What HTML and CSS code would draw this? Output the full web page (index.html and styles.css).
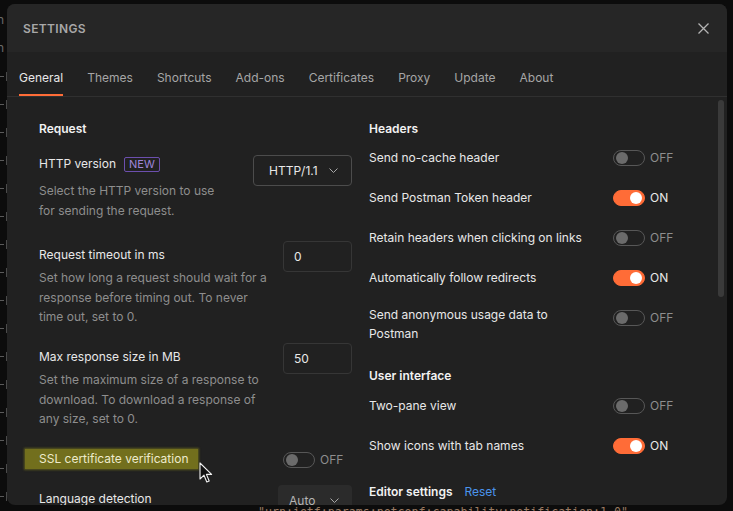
FILE: index.html
```html
<!DOCTYPE html>
<html lang="en">
<head>
  <meta charset="UTF-8" />
  <meta name="viewport" content="width=device-width, initial-scale=1" />
  <title>Settings</title>
  <link rel="stylesheet" href="styles.css">
</head>
<body>
  <!-- Editor behind the dialog -->
  <div class="app">
    <div class="gutter">
      <span class="gutter-text">n</span>
      <span class="gutter-text">n</span>
      <span class="fold"></span><span class="fold"></span><span class="fold"></span>
      <span class="fold"></span><span class="fold"></span><span class="fold"></span>
      <span class="fold"></span><span class="fold"></span><span class="fold"></span>
      <span class="fold"></span><span class="fold"></span><span class="fold"></span>
      <span class="fold"></span><span class="fold"></span><span class="fold"></span>
      <span class="fold"></span>
    </div>
    <div class="code">
      <div class="code-line">"urn:ietf:params:netconf:capability:notification:1.0",</div>
    </div>
  </div>

  <div class="modal">
    <div class="modal-header">
      <h2 class="modal-title">SETTINGS</h2>
      <button class="close" aria-label="Close">
        <svg width="11" height="11" viewBox="0 0 11 11"><path d="M0.5 0.5L10.5 10.5M10.5 0.5L0.5 10.5" stroke="#b4b4b4" stroke-width="1.3" fill="none"/></svg>
      </button>
    </div>

    <nav class="tabs">
      <a class="tab active">General</a>
      <a class="tab">Themes</a>
      <a class="tab">Shortcuts</a>
      <a class="tab">Add-ons</a>
      <a class="tab">Certificates</a>
      <a class="tab">Proxy</a>
      <a class="tab">Update</a>
      <a class="tab">About</a>
    </nav>

    <div class="content">
      <section class="col">
        <h3 class="section-title">Request</h3>

        <div class="field field--first">
          <div class="field-text">
            <div class="field-label">HTTP version <span class="badge">NEW</span></div>
            <p class="field-desc">Select the HTTP version to use for sending the request.</p>
          </div>
          <button class="select select--http">HTTP/1.1
            <svg width="9" height="5" viewBox="0 0 9 5"><path d="M0.5 0.5L4.5 4.5L8.5 0.5" stroke="#a8a8a8" fill="none"/></svg>
          </button>
        </div>

        <div class="field">
          <div class="field-text">
            <div class="field-label">Request timeout in ms</div>
            <p class="field-desc">Set how long a request should wait for a response before timing out. To never time out, set to 0.</p>
          </div>
          <input class="input" type="text" value="0">
        </div>

        <div class="field">
          <div class="field-text">
            <div class="field-label">Max response size in MB</div>
            <p class="field-desc">Set the maximum size of a response to download. To download a response of any size, set to 0.</p>
          </div>
          <input class="input" type="text" value="50">
        </div>

        <div class="field">
          <div class="field-text">
            <div class="field-label"><span class="marker">SSL certificate verification</span></div>
          </div>
          <div class="field-toggle">
            <span class="toggle"><span class="switch"><i></i></span>OFF</span>
          </div>
        </div>

        <div class="field field--last">
          <div class="field-text">
            <div class="field-label">Language detection</div>
          </div>
          <button class="select select--auto">Auto
            <svg width="9" height="5" viewBox="0 0 9 5"><path d="M0.5 0.5L4.5 4.5L8.5 0.5" stroke="#a8a8a8" fill="none"/></svg>
          </button>
        </div>
      </section>

      <section class="col">
        <h3 class="section-title">Headers</h3>
        <div class="rows">
          <div class="row"><span class="row-label">Send no-cache header</span><span class="toggle"><span class="switch"><i></i></span>OFF</span></div>
          <div class="row"><span class="row-label">Send Postman Token header</span><span class="toggle on"><span class="switch"><i></i></span>ON</span></div>
          <div class="row"><span class="row-label">Retain headers when clicking on links</span><span class="toggle"><span class="switch"><i></i></span>OFF</span></div>
          <div class="row"><span class="row-label">Automatically follow redirects</span><span class="toggle on"><span class="switch"><i></i></span>ON</span></div>
          <div class="row"><span class="row-label">Send anonymous usage data to Postman</span><span class="toggle"><span class="switch"><i></i></span>OFF</span></div>
        </div>

        <h3 class="section-title section-title--spaced">User interface</h3>
        <div class="rows">
          <div class="row"><span class="row-label">Two-pane view</span><span class="toggle"><span class="switch"><i></i></span>OFF</span></div>
          <div class="row"><span class="row-label">Show icons with tab names</span><span class="toggle on"><span class="switch"><i></i></span>ON</span></div>
        </div>

        <h3 class="section-title section-title--editor">Editor settings <a class="reset" href="#">Reset</a></h3>
      </section>

      <div class="scroll-thumb"></div>
    </div>

    <!-- mouse pointer captured in the screenshot -->
    <svg class="cursor" width="14" height="22" viewBox="0 0 14 22">
      <path d="M1 1L1 17L5 13.2L7.8 20L10.2 19L7.4 12.4L12.6 12.4Z" fill="#121212" stroke="#f0f0f0" stroke-width="1.1" stroke-linejoin="round"/>
    </svg>
  </div>
</body>
</html>
```

FILE: styles.css
```css
:root {
  --bg-app: #0c0c0c;
  --bg-modal: #212121;
  --bg-header: #262626;
  --border: #333333;
  --text-primary: #e8e8e8;
  --text-secondary: #8e8e8e;
  --text-tab: #a6a6a6;
  --accent: #ff6c37;
  --link: #4a94ec;
}

* {
  margin: 0;
  padding: 0;
  box-sizing: border-box;
}

body {
  position: relative;
  height: 511px;
  overflow: hidden;
  background: var(--bg-app);
  font-family: 'Inter', 'Noto Sans', sans-serif;
  font-size: 12px;
  color: var(--text-primary);
}

/* Editor in the background */
.app {
  display: flex;
  height: 511px;
}

.gutter {
  width: 7px;
  display: flex;
  flex-direction: column;
  padding-top: 6px;
  overflow: hidden;
}

.gutter-text {
  height: 28px;
  line-height: 28px;
  font-size: 12px;
  color: #6a6a6a;
  text-indent: -3px;
}

.fold {
  height: 28px;
  display: flex;
  align-items: center;
}

.fold::before {
  content: '';
  width: 4px;
  height: 1px;
  background: #5a5a5a;
}

.fold::after {
  content: '';
  width: 1px;
  height: 9px;
  margin-left: 2px;
  background: #4a4a4a;
}

.code {
  flex: 1;
  display: flex;
  flex-direction: column;
  justify-content: flex-end;
  padding-left: 251px;
}

.code-line {
  font-family: 'DejaVu Sans Mono', monospace;
  font-size: 11.6px;
  line-height: 16px;
  margin-bottom: -9px;
  color: #9a7a62;
  white-space: nowrap;
}

/* Dialog */
.modal {
  position: absolute;
  top: 4px;
  left: 7px;
  width: 720px;
  height: 501px;
  background: var(--bg-modal);
  border-radius: 8px;
  overflow: hidden;
  display: flex;
  flex-direction: column;
}

.modal-header {
  height: 48px;
  flex-shrink: 0;
  background: var(--bg-header);
  display: flex;
  align-items: center;
  justify-content: space-between;
  padding: 0 16px;
}

.modal-title {
  font-size: 12px;
  font-weight: 600;
  letter-spacing: 0.03em;
  color: #a8a8a8;
}

.close {
  width: 16px;
  height: 16px;
  border: none;
  background: none;
  display: flex;
  align-items: center;
  justify-content: center;
}

/* Tabs */
.tabs {
  height: 45px;
  flex-shrink: 0;
  display: flex;
  gap: 24px;
  padding: 0 12px;
  border-bottom: 1px solid #303030;
}

.tab {
  display: flex;
  align-items: center;
  padding-top: 8px;
  border-bottom: 2px solid transparent;
  font-size: 12px;
  color: var(--text-tab);
  text-decoration: none;
}

.tab.active {
  color: var(--text-primary);
  border-bottom-color: var(--accent);
}

/* Content */
.content {
  position: relative;
  flex: 1;
  overflow: hidden;
  display: grid;
  grid-template-columns: 313px 1fr;
  column-gap: 17px;
  align-items: start;
  padding: 24px 32px 0;
}

.section-title {
  font-size: 12px;
  font-weight: 600;
  line-height: 16px;
  color: #f2f2f2;
}

.section-title--spaced {
  margin-top: 25px;
}

.section-title--editor {
  margin-top: 27px;
  display: flex;
  gap: 12px;
}

.reset {
  font-weight: 400;
  color: var(--link);
  text-decoration: none;
}

/* Left column fields */
.field {
  display: flex;
  align-items: flex-start;
  justify-content: space-between;
  gap: 16px;
  margin-top: 16px;
}

.field--first {
  margin-top: 10px;
  margin-bottom: 21px;
}

.field--last {
  margin-top: 16px;
}

.field-text {
  flex: 1;
  padding-top: 4px;
}

.field-label {
  display: flex;
  align-items: center;
  gap: 8px;
  line-height: 20px;
  color: var(--text-primary);
}

.field--first .field-label {
  min-height: 26px;
}

.field-desc {
  margin-top: 3px;
  line-height: 19.6px;
  color: var(--text-secondary);
}

.field--first .field-desc {
  max-width: 190px;
  margin-top: 4px;
}

.badge {
  font-size: 11px;
  line-height: 13px;
  padding: 0 4px;
  border: 1px solid #6c4fae;
  border-radius: 2px;
  color: #9f86da;
}

.marker {
  margin-left: -14px;
  padding: 0 10px 0 14px;
  background: #726f1d;
  box-shadow: 0 0 2px 1px rgba(114, 111, 29, 0.7);
  color: #eeebcc;
}

.select {
  height: 31px;
  display: flex;
  align-items: center;
  justify-content: space-between;
  border-radius: 4px;
  font-family: inherit;
  font-size: 12px;
}

.select--http {
  width: 99px;
  margin-top: 8px;
  padding: 0 13px 0 15px;
  background: transparent;
  border: 1px solid #4c4c4c;
  color: var(--text-primary);
}

.select--auto {
  width: 74px;
  padding: 0 13px 0 11px;
  background: #2b2b2b;
  border: none;
  color: #b4b4b4;
}

.input {
  width: 69px;
  height: 31px;
  padding: 0 10px;
  background: transparent;
  border: 1px solid #363636;
  border-radius: 4px;
  font-family: inherit;
  font-size: 12px;
  color: var(--text-primary);
  outline: none;
}

.field-toggle {
  width: 69px;
  padding-top: 7px;
}

/* Right column rows */
.rows {
  display: flex;
  flex-direction: column;
  gap: 16px;
  margin-top: 8px;
}

.section-title--spaced + .rows {
  margin-top: 9px;
}

.row {
  display: grid;
  grid-template-columns: 228px auto;
  column-gap: 16px;
  align-items: start;
}

.row-label {
  min-height: 24px;
  display: flex;
  align-items: center;
  line-height: 19px;
  color: var(--text-primary);
}

.row .toggle {
  height: 24px;
  padding-top: 2px;
}

/* Toggle switch */
.toggle {
  display: flex;
  align-items: center;
  gap: 5px;
  font-size: 12px;
  line-height: 16px;
  color: var(--text-secondary);
}

.switch {
  width: 32px;
  height: 16px;
  display: flex;
  align-items: center;
  padding: 0 2px;
  border: 1px solid #575757;
  border-radius: 8px;
}

.switch i {
  width: 12px;
  height: 12px;
  border-radius: 50%;
  background: #6b6b6b;
}

.toggle.on {
  color: var(--text-primary);
}

.toggle.on .switch {
  justify-content: flex-end;
  background: var(--accent);
  border-color: var(--accent);
}

.toggle.on .switch i {
  background: #ffffff;
}

/* Overlay bits */
.scroll-thumb {
  position: absolute;
  top: 3px;
  left: 711px;
  width: 6px;
  height: 197px;
  border-radius: 3px;
  background: #3a3a3a;
}

.cursor {
  position: absolute;
  left: 192px;
  top: 458px;
}
```
